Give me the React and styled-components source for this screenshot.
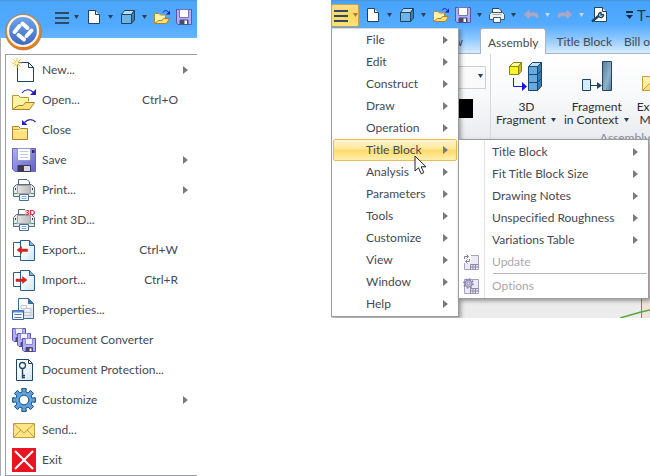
import React from 'react'
import styled, { createGlobalStyle, css } from 'styled-components'

const theme = {
  text: '#454952',
  muted: '#a9a9ad',
  line: '#9a9ca6',
  outline: '#1f4566',
  font: 'Lato, "Open Sans", sans-serif',
}

const GlobalStyle = createGlobalStyle`
  * { box-sizing: border-box; }
  body {
    margin: 0;
    background: #fff;
    color: ${theme.text};
    font-family: ${theme.font};
    font-size: 12px;
    font-variant-ligatures: none;
    line-height: 16px;
  }
  svg { display: block; flex: none; }
`

const Page = styled.div`
  display: flex;
  align-items: flex-start;
  gap: 134px;
`

const AppWindow = styled.section`
  position: relative;
  flex: ${props => props.$grow} 1 0;
  min-width: 0;
  overflow: hidden;
`

const plainButton = css`
  display: flex;
  align-items: center;
  margin: 0;
  padding: 0;
  border: none;
  background: none;
  color: inherit;
  font: inherit;
  font-variant-ligatures: none;
  white-space: nowrap;
`

/* title bar and quick access */

const TitleBar = styled.header`
  height: 38px;
  padding: 4px 0 0 52px;
  overflow: hidden;
  background: linear-gradient(#4d93d4 0, #4ca6fb 2px, #51aafe 26px, #68b5ff 100%);
`

const QuickBar = styled.div`
  display: flex;
  align-items: center;
  gap: 6px;
  height: 26px;
`

const ToolButton = styled.button`
  ${plainButton}
  flex: none;
  gap: 5px;
  height: 22px;
`

const MenuToggle = styled(ToolButton)`
  width: 28px;
  height: 23px;
  gap: 4px;
  padding-left: 3px;
  border-radius: 2px;
  ${props => props.$open && css`
    padding-left: 2px;
    border: 1px solid #c9a24a;
    background: linear-gradient(#f7dc8c, #ffd765 50%, #ffe27c);
  `}
`

const TitleText = styled.div`
  display: flex;
  align-items: center;
  gap: 4px;
  margin-left: 12px;
  color: #22384f;
  font-size: 15px;
  white-space: nowrap;
`

const Orb = styled.button`
  ${plainButton}
  position: absolute;
  top: 12px;
  left: 4px;
  border-radius: 50%;
`

/* application menu */

const AppBody = styled.div`
  padding: 16px 0 0 4px;
  border-left: 1px solid #a9abb2;
  background: #fff;
`

const AppMenu = styled.nav`
  border: 1px solid ${theme.line};
  border-right: none;
`

const AppItem = styled.button`
  ${plainButton}
  width: 100%;
  height: 30px;
  gap: 6px;
  padding: 0 9px 0 6px;
`

const Label = styled.span`
  flex: 1;
  text-align: left;
`

const Shortcut = styled.span`
  margin-right: 10px;
`

/* ribbon window */

const RibbonHead = styled.header`
  padding-top: 2px;
  background: linear-gradient(#4d93d4 0, #47a3fc 2px, #52abff 24px, #8ac6ff 38px, #dceeff 100%);
`

const Tabs = styled.div`
  display: flex;
  align-items: stretch;
  height: 26px;
  border-bottom: 1px solid #a3b4c6;
`

const Tab = styled.button`
  ${plainButton}
  flex: none;
  padding: 2px 6px 0;
  ${props => props.$first && css`
    justify-content: flex-end;
    width: 138px;
    margin-right: 11px;
  `}
  ${props => props.$active && css`
    height: 26px;
    margin-right: 4px;
    padding: 2px 7px 0;
    border: 1px solid #a3b4c6;
    border-bottom: none;
    border-radius: 3px 3px 0 0;
    background: #fff;
  `}
`

const Ribbon = styled.div`
  display: flex;
  height: 86px;
  overflow: hidden;
  border-bottom: 1px solid #8f929a;
  background: linear-gradient(#fff, #f8f9fa 50%, #e9ebef);
`

const StyleGroup = styled.div`
  display: flex;
  flex: 0 0 160px;
  flex-direction: column;
  align-items: flex-end;
  gap: 10px;
  padding: 12px 4px 0 0;
  border-right: 1px solid #d5d8dd;
`

const Combo = styled.div`
  position: relative;
  width: 100px;

  svg {
    position: absolute;
    top: 8px;
    right: 2px;
    pointer-events: none;
  }
`

const Select = styled.select`
  width: 100%;
  height: 23px;
  border: 1px solid #cdd0d5;
  border-radius: 0;
  background: #fafafb;
  appearance: none;
`

const Swatch = styled.button`
  ${plainButton}
  width: 30px;
  height: 19px;
  margin-right: 13px;
  background: #000;
`

const Group = styled.div`
  flex: 0 0 268px;
`

const GroupButtons = styled.div`
  display: flex;
  gap: 1px;
  height: 76px;
  padding: 7px 0 0 2px;
`

const RibbonButton = styled.button`
  ${plainButton}
  flex-direction: column;
  flex: none;
  gap: 7px;
  padding: 0 3px;
  color: #2c2f35;
  line-height: 13px;
  justify-content: flex-start;
`

const ButtonLine = styled.span`
  display: flex;
  align-items: center;
  justify-content: center;
  gap: 4px;
`

const GroupName = styled.div`
  color: #868b97;
  text-align: center;
`

const Canvas = styled.main`
  display: flex;
  justify-content: flex-end;
  align-items: flex-end;
  min-height: 178px;
  background: #ececed;
`

/* drop-down menus */

const Popup = styled.div`
  position: absolute;
  padding: 0 1px 1px;
  border: 1px solid #999ba1;
  background: #fff;
  box-shadow: 2px 2px 4px rgba(0, 0, 0, 0.35);
`

const MainMenu = styled(Popup)`
  top: 28px;
  left: 0;
  width: 128px;
  border-top-color: #d8dbe0;
`

const SubMenu = styled(Popup)`
  top: 0;
  left: 125px;
  width: 191px;
  padding-top: 1px;
  background: linear-gradient(90deg, #fff 25px, #e2e4e8 25px, #e2e4e8 26px, #fff 26px);
`

const MenuRow = styled.div`
  position: relative;
`

const MenuItem = styled.button`
  ${plainButton}
  width: 100%;
  height: 22px;
  padding: 0 9px 0 33px;
  ${props => props.$open && css`
    padding: 0 8px 0 32px;
    border: 1px solid #e3bf55;
    border-radius: 2px;
    background: linear-gradient(#fff4cf, #fee79a 45%, #ffd966 50%, #fff0b0);
  `}
`

const SubItem = styled(MenuItem)`
  gap: 12px;
  padding: 0 9px 0 3px;
  &:disabled { color: ${theme.muted}; }
`

const IconSlot = styled.span`
  flex: 0 0 17px;
`

const Separator = styled.hr`
  margin: 0 0 1px 33px;
  border: none;
  border-top: 1px solid #b4b5b9;
`

const Pointer = styled.svg`
  position: absolute;
  top: 16px;
  left: 81px;
  z-index: 2;
`

/* icons */

const Icon = ({ size = 24, children }) => (
  <svg width={size} height={size} viewBox="0 0 24 24" fill="none" stroke={theme.outline} aria-hidden="true">
    {children}
  </svg>
)

const Mini = ({ children }) => (
  <svg width="16" height="16" viewBox="0 0 16 16" fill="none" stroke={theme.outline} aria-hidden="true">
    {children}
  </svg>
)

const Arrow = () => (
  <svg width="5" height="8" viewBox="0 0 5 8" aria-hidden="true"><path d="M0 0L5 4L0 8z" fill="#777a80" /></svg>
)

const Caret = ({ color = '#2b4157' }) => (
  <svg width="7" height="4" viewBox="0 0 7 4" aria-hidden="true"><path d="M1 0H6L3.5 4z" fill={color} /></svg>
)

const Gradients = () => (
  <svg width="0" height="0" style={{ position: 'absolute' }} aria-hidden="true">
    <defs>
      <linearGradient id="violet" x1="0" y1="0" x2="1" y2="1">
        <stop offset="0" stopColor="#b4b0f6" /><stop offset="1" stopColor="#625dc8" />
      </linearGradient>
      <linearGradient id="paper" x1="0" y1="0" x2="1" y2="1">
        <stop offset="0.3" stopColor="#fff" /><stop offset="1" stopColor="#cfe2f4" />
      </linearGradient>
      <linearGradient id="ring" x1="0" y1="0" x2="0" y2="1">
        <stop offset="0" stopColor="#b9a48e" /><stop offset="0.45" stopColor="#d98a3a" /><stop offset="1" stopColor="#e8780c" />
      </linearGradient>
      <linearGradient id="disc" x1="0" y1="0" x2="0" y2="1">
        <stop offset="0" stopColor="#6ea6ea" /><stop offset="1" stopColor="#3b66c4" />
      </linearGradient>
      <linearGradient id="slab" x1="0" y1="0" x2="1" y2="1">
        <stop offset="0" stopColor="#5a7f9c" /><stop offset="0.6" stopColor="#8fb0c8" /><stop offset="1" stopColor="#54799a" />
      </linearGradient>
      <linearGradient id="body" x1="0" y1="0" x2="1" y2="0">
        <stop offset="0" stopColor="#e4e4e4" /><stop offset="1" stopColor="#b9b9b9" />
      </linearGradient>
    </defs>
  </svg>
)

const NewIcon = () => (
  <Icon>
    <path d="M5.5 4.5H16.5L21.5 9.5V23.5H5.5z" fill="#fff" />
    <path d="M16.5 4.5V9.5H21.5" />
    <path d="M5 0V10M0 5H10M1.5 1.5L8.5 8.5M8.5 1.5L1.5 8.5" stroke="#e3c53c" />
    <circle cx="5" cy="5" r="1.5" fill="#fff9c0" stroke="none" />
  </Icon>
)

const OpenIcon = () => (
  <Icon>
    <path d="M0.5 21.5V7.5H6.5L8.5 9.5H16.5V13.5" fill="#fff3a6" stroke="#b8963a" />
    <path d="M0.5 21.5L6.5 17.5H11L13.5 14.5H22.5L17.5 21.5z" fill="#ffe07a" stroke="#a9822a" />
    <path d="M10 5C13 1 18 0.5 21.5 4.5" stroke="#2a20b8" strokeWidth="1.2" />
    <path d="M18 7H24V1z" fill="#2a20b8" stroke="none" />
  </Icon>
)

const CloseIcon = () => (
  <Icon>
    <path d="M0.5 21.5V8.5H6.5L8.5 10.5H15.5V21.5z" fill="#ffe27e" stroke="#a9822a" />
    <path d="M1 12.5H15" stroke="#fff4bd" />
    <path d="M0.5 11.5H7.5L8.5 10.5" stroke="#c9a346" />
    <path d="M12.5 4.5C16 0.5 21 1 23.5 4" stroke="#2a20b8" strokeWidth="1.2" />
    <path d="M10 2V7H15.5z" fill="#2a20b8" stroke="none" />
  </Icon>
)

const SaveIcon = () => (
  <Icon>
    <path d="M0.5 0.5H23.5V23.5H3L0.5 21z" fill="url(#violet)" stroke="#6864b4" />
    <path d="M5.5 0.5H18.5V11.5L17 12.5H7L5.5 11.5z" fill="#fff" stroke="#8a9cc0" />
    <path d="M8 3.5H16M8 6.5H16M8 9.5H16" stroke="#b6cde4" />
    <rect x="20" y="2" width="2.5" height="3" fill="#2c2a6c" stroke="none" />
    <path d="M6 17.5H18.5V23.5H6z" fill="#3c3c44" stroke="#3a3868" />
    <path d="M12 18H18V23H12z" fill="#d6d8dc" stroke="none" />
  </Icon>
)

const PrintIcon = ({ children }) => (
  <Icon>
    <path d="M6.5 8V1.5H15L17.5 4V8z" fill="#fff" stroke="#4d6378" />
    <path d="M1.5 9.5L4.5 6.5H19.5L22.5 9.5V18.5H1.5z" fill="#e6e8e9" stroke="#5b6c7a" />
    <path d="M5.5 7.5H18.5V15.5H5.5z" fill="url(#body)" stroke="#9da5ab" />
    <path d="M3.5 10V12M20.5 10V12" stroke="#2c4657" />
    <path d="M2 15.5H5M19 15.5H22" stroke="#4ba06f" />
    <path d="M7.5 16.5H16.5V22.5H7.5z" fill="#f3f9ff" stroke="#4d6f91" />
    <path d="M9.5 18.5H14.5M9.5 20.5H14.5" stroke="#8bb5d8" />
    {children}
  </Icon>
)

const Print3DIcon = () => (
  <PrintIcon>
    <path d="M13 0H24V7H13z" fill="#fff" stroke="none" />
    <text x="13" y="7" fill="#d8161c" stroke="none" fontFamily="Liberation Sans, sans-serif" fontSize="8" fontWeight="700">3D</text>
  </PrintIcon>
)

const TwoPages = ({ children }) => (
  <Icon>
    <path d="M1.5 4.5H11.5V18.5H1.5z" fill="#fff" stroke="#2d5f8c" />
    <path d="M8.5 2.5H17.5L22.5 7.5V22.5H8.5z" fill="url(#paper)" stroke="#2d5f8c" />
    <path d="M17.5 2.5V7.5H22.5" fill="#7fb2de" stroke="#2d5f8c" />
    {children}
  </Icon>
)

const ExportIcon = () => (
  <TwoPages><path d="M5 12L9.5 8.5V11H15.5V13.5H9.5V15.5z" fill="#e2211f" stroke="#a8201e" strokeWidth="0.5" /></TwoPages>
)

const ImportIcon = () => (
  <TwoPages><path d="M15 12L10.5 8.5V11H4V13.5H10.5V15.5z" fill="#e2211f" stroke="#a8201e" strokeWidth="0.5" /></TwoPages>
)

const PropertiesIcon = () => (
  <Icon>
    <path d="M6.5 0.5H16.5L21.5 5.5V20.5H6.5z" fill="url(#paper)" stroke="#3c6a96" />
    <path d="M16.5 0.5V5.5H21.5" fill="#3b73ac" stroke="#3c6a96" />
    <path d="M9 7.5H14.5V10.5H9zM14.5 10.5H19V14.5H12V10.5M12 14.5V17.5H19V14.5" stroke="#c3c6cb" />
    <path d="M0.5 12.5H11.5V21.5H0.5z" fill="#f4f8fd" stroke="#3b5f9c" />
    <path d="M1 13.5H11" stroke="#5f8ad6" strokeWidth="2" />
    <path d="M2.5 16.5H9.5M2.5 19.5H9.5" stroke="#5b7aa5" />
  </Icon>
)

const ConverterIcon = () => (
  <Icon>
    {[0, 5, 10].map(d => (
      <g key={d} transform={`translate(${d} ${d})`}>
        <path d="M0.5 0.5H13.5V13.5H2L0.5 12z" fill="#b4affa" stroke="#5a54ae" />
        <path d="M3.5 0.5H10.5V6.5H3.5z" fill="#f1f1fb" stroke="#8d89cc" />
        <path d="M4 9.5H10.5V13.5H4z" fill="#47464d" stroke="#4b4788" />
        <path d="M7.5 10.5H9.5V13H7.5z" fill="#fff" stroke="none" />
      </g>
    ))}
  </Icon>
)

const ProtectionIcon = () => (
  <Icon>
    <path d="M4.5 1.5H16.5L20.5 5.5V22.5H4.5z" fill="url(#paper)" />
    <path d="M16.5 1.5V5.5H20.5" />
    <circle cx="10.5" cy="7.5" r="3" fill="#fff" strokeWidth="1.3" />
    <path d="M10.5 10.5V20.5M10.5 17.5H13M10.5 19.5H13" strokeWidth="1.4" />
  </Icon>
)

const gearPath = (() => {
  const points = []
  for (let i = 0; i < 8; i++) {
    const mid = (i * Math.PI) / 4
    const corners = [[8.2, -0.24], [11.6, -0.2], [11.6, 0.2], [8.2, 0.24]]
    corners.forEach(([r, a]) => {
      points.push(`${(12 + r * Math.cos(mid + a)).toFixed(1)} ${(12 + r * Math.sin(mid + a)).toFixed(1)}`)
    })
  }
  return `M${points.join('L')}z`
})()

const CustomizeIcon = () => (
  <Icon>
    <path d={gearPath} fill="#5da2de" stroke="#1d4f7e" />
    <circle cx="12" cy="12" r="4.8" fill="#fff" stroke="#1d4f7e" />
  </Icon>
)

const SendIcon = () => (
  <Icon>
    <path d="M1.5 5.5H22.5V19.5H1.5z" fill="#ffe583" stroke="#c19c45" />
    <path d="M2 19L9 12M22 19L15 12M2 6L12 15L22 6" stroke="#c19c45" />
  </Icon>
)

const ExitIcon = () => (
  <Icon>
    <path d="M0 0H24V24H0z" fill="#ea1321" stroke="none" />
    <path d="M3 3L21 21M21 3L3 21" stroke="#fff" strokeWidth="2" />
  </Icon>
)

const Bars = () => (
  <svg width="14" height="13" viewBox="0 0 14 13" aria-hidden="true">
    <path d="M0 2H14M0 7H14M0 12H14" stroke="#2f4b63" strokeWidth="2" />
  </svg>
)

const PageIcon = () => (
  <Mini>
    <path d="M2.5 1.5H9.5L13.5 5.5V14.5H2.5z" fill="#fff" />
    <path d="M9.5 1.5V5.5H13.5" fill="#d9e9f6" />
  </Mini>
)

const CubeIcon = () => (
  <Mini>
    <path d="M1.5 5.5L4.5 1.5H14.5L11.5 5.5z" fill="#b5def9" />
    <path d="M11.5 5.5L14.5 1.5V11L11.5 14.5z" fill="#3f7dac" />
    <path d="M1.5 5.5H11.5V14.5H1.5z" fill="#6fb4e6" />
  </Mini>
)

const OpenMini = () => (
  <Mini>
    <path d="M0.5 14.5V4.5H5L6.5 6H11.5V9" fill="#fff3a6" stroke="#b08f3c" />
    <path d="M0.5 14.5L4.5 11.5H8L9.5 9.5H15.5L12.5 14.5z" fill="#ffe07a" stroke="#a9822a" />
    <path d="M9 3.5C10.5 1 13 1 14 3" stroke="#2018b0" />
    <path d="M12 5.5H16V1.5z" fill="#2018b0" stroke="none" />
  </Mini>
)

const SaveMini = () => (
  <Mini>
    <path d="M0.5 0.5H15.5V15.5H2L0.5 14z" fill="#b4aef6" stroke="#5b55a8" />
    <path d="M3.5 0.5H12.5V8.5H3.5z" fill="#fff" stroke="#7772b8" />
    <path d="M4 11H12V15H4z" fill="#4a4a55" stroke="#4b4788" />
    <path d="M8.5 11.5H11V15H8.5z" fill="#fff" stroke="none" />
  </Mini>
)

const PrintMini = () => (
  <Mini>
    <path d="M3.5 6V1.5H10L12.5 4V6z" fill="#fff" />
    <path d="M0.5 7.5L2.5 5.5H13.5L15.5 7.5V12.5H0.5z" fill="#eceeef" stroke="#3f5a70" />
    <path d="M3.5 7.5H12.5" stroke="#a9afb4" />
    <path d="M4.5 10.5H11.5V15.5H4.5z" fill="#f3f9ff" stroke="#3f5a70" />
  </Mini>
)

const UndoIcon = () => (
  <Mini><path d="M1 7.5L6 3.5V6H13.5L15 7.5V10.5H13V9H6V11.5z" fill="#a5a8cc" stroke="#b3a3bb" strokeWidth="0.8" /></Mini>
)

const RedoIcon = () => (
  <Mini><path d="M15 7.5L10 3.5V6H2.5L1 7.5V10.5H3V9H10V11.5z" fill="#a5a8cc" stroke="#b3a3bb" strokeWidth="0.8" /></Mini>
)

const WrenchIcon = () => (
  <Mini>
    <path d="M3.5 0.5H11.5L15.5 4.5V14.5H3.5z" fill="#fff" />
    <path d="M11.5 0.5V4.5H15.5" fill="#d9e9f6" />
    <path d="M1 14.5L7.5 9" strokeWidth="2.4" />
    <path d="M12.5 7.5A2.5 2.5 0 1 1 10 5.5L10 8z" fill="#e6f1fa" strokeWidth="1.4" />
  </Mini>
)

const OrbIcon = () => (
  <svg width="40" height="40" viewBox="0 0 40 40" aria-hidden="true">
    <circle cx="19.5" cy="20" r="18" fill="url(#ring)" stroke="#8c7660" strokeOpacity="0.6" />
    <circle cx="19" cy="19" r="15" fill="url(#disc)" stroke="#fff3e2" strokeWidth="2.2" />
    <path
      d="M18.5 11.5L23.5 16M27.5 18.5L22.5 24M20 27.5L14.5 23M10.5 20L15.5 14"
      fill="none"
      stroke="#fff"
      strokeWidth="4"
      strokeLinecap="round"
    />
  </svg>
)

const FragmentIcon = () => (
  <svg width="34" height="32" viewBox="0 0 34 32" fill="none" aria-hidden="true">
    <g stroke="#8b8410">
      <path d="M0.5 5.5L4.5 1.5H12.5L9.5 5.5z" fill="#ffffa0" />
      <path d="M9.5 5.5L12.5 1.5V10L9.5 13.5z" fill="#c9bd12" />
      <path d="M0.5 5.5H9.5V13.5H0.5z" fill="#fbf32c" />
    </g>
    <path d="M4.5 17V25.5H14" stroke="#1914e0" />
    <path d="M13 21L18 25.5L13 30z" fill="#1914e0" />
    <g stroke="#17466e">
      <path d="M19.5 5.5L23.5 1.5H32.5L28.5 5.5z" fill="#bfe2fb" />
      <path d="M28.5 5.5L32.5 1.5V25L28.5 29.5z" fill="#3b79aa" />
      <path d="M19.5 5.5H28.5V29.5H19.5z" fill="#68aadd" />
      <path d="M19.5 13.5H28.5L32.5 9.5M19.5 21.5H28.5L32.5 17.5" />
    </g>
  </svg>
)

const ContextIcon = () => (
  <svg width="32" height="32" viewBox="0 0 32 32" fill="none" stroke={theme.outline} aria-hidden="true">
    <path d="M1.5 18.5H9.5V29.5H1.5z" fill="#d3ebfb" />
    <path d="M21.5 0.5H30.5V29.5H21.5z" fill="url(#slab)" />
    <path d="M10 24.5H18" />
    <path d="M16 21L21 24.5L16 28z" fill={theme.outline} stroke="none" />
  </svg>
)

const FolderIcon = () => (
  <svg width="12" height="32" viewBox="0 0 12 32" fill="none" stroke="#c49d3c" aria-hidden="true">
    <path d="M0.5 29.5V15.5H7.5L9.5 18.5H12.5V29.5z" fill="#fff2a4" />
    <path d="M0.5 29.5L7.5 22.5H12.5V29.5z" fill="#ffdf7c" />
  </svg>
)

const TableShape = () => (
  <>
    <path d="M1.5 1.5H15.5V15.5H1.5z" fill="#eceaf4" stroke="#a5a1c0" />
    <path d="M7.5 10.5H15.5M7.5 13H15.5M7.5 10.5V15.5M10 10.5V15.5M12.5 10.5V15.5" stroke="#8b86ae" />
  </>
)

const UpdateIcon = () => (
  <Mini>
    <TableShape />
    <path d="M0 0H8V9H0z" fill="#fff" stroke="none" />
    <path d="M1.5 5V2.5H5M3.5 0.5L5.5 2.5L3.5 4.5M6.5 5V7.5H3M4.5 5.5L2.5 7.5L4.5 9.5" stroke="#817ca6" />
  </Mini>
)

const OptionsIcon = () => (
  <Mini>
    <TableShape />
    <circle cx="5.5" cy="5.5" r="4.5" stroke="#8681aa" strokeWidth="1.6" strokeDasharray="1.8 1.7" />
    <circle cx="5.5" cy="5.5" r="3.5" fill="#c4c1da" stroke="#8681aa" />
    <circle cx="5.5" cy="5.5" r="1.3" fill="#fff" stroke="#8681aa" />
  </Mini>
)

const appItems = [
  { label: 'New...', icon: NewIcon, sub: true },
  { label: 'Open...', icon: OpenIcon, keys: 'Ctrl+O' },
  { label: 'Close', icon: CloseIcon },
  { label: 'Save', icon: SaveIcon, sub: true },
  { label: 'Print...', icon: PrintIcon, sub: true },
  { label: 'Print 3D...', icon: Print3DIcon },
  { label: 'Export...', icon: ExportIcon, keys: 'Ctrl+W' },
  { label: 'Import...', icon: ImportIcon, keys: 'Ctrl+R' },
  { label: 'Properties...', icon: PropertiesIcon },
  { label: 'Document Converter', icon: ConverterIcon },
  { label: 'Document Protection...', icon: ProtectionIcon },
  { label: 'Customize', icon: CustomizeIcon, sub: true },
  { label: 'Send...', icon: SendIcon },
  { label: 'Exit', icon: ExitIcon },
]

const mainItems = [
  'File', 'Edit', 'Construct', 'Draw', 'Operation', 'Title Block', 'Analysis',
  'Parameters', 'Tools', 'Customize', 'View', 'Window', 'Help',
]

const subItems = ['Title Block', 'Fit Title Block Size', 'Drawing Notes', 'Unspecified Roughness', 'Variations Table']

const FileTools = ({ open, saveMenu }) => (
  <>
    <MenuToggle aria-label="Menu" $open={open}><Bars /><Caret color={open ? '#a08040' : undefined} /></MenuToggle>
    <ToolButton aria-label="New"><PageIcon /><Caret /></ToolButton>
    <ToolButton aria-label="Model"><CubeIcon /><Caret /></ToolButton>
    <ToolButton aria-label="Open"><OpenMini /></ToolButton>
    <ToolButton aria-label="Save"><SaveMini />{saveMenu && <Caret />}</ToolButton>
  </>
)

const FileWindow = () => (
  <AppWindow $grow={197}>
    <TitleBar>
      <QuickBar><FileTools /></QuickBar>
    </TitleBar>
    <AppBody>
      <AppMenu>
        {appItems.map(({ label, icon: ItemIcon, keys, sub }) => (
          <AppItem key={label}>
            <ItemIcon />
            <Label>{label}</Label>
            {keys && <Shortcut>{keys}</Shortcut>}
            {sub && <Arrow />}
          </AppItem>
        ))}
      </AppMenu>
    </AppBody>
    <Orb aria-label="Application menu"><OrbIcon /></Orb>
  </AppWindow>
)

const TitleBlockMenu = () => (
  <SubMenu>
    {subItems.map(label => (
      <SubItem key={label}><IconSlot /><Label>{label}</Label><Arrow /></SubItem>
    ))}
    <SubItem disabled><IconSlot><UpdateIcon /></IconSlot><Label>Update</Label></SubItem>
    <Separator />
    <SubItem disabled><IconSlot><OptionsIcon /></IconSlot><Label>Options</Label></SubItem>
  </SubMenu>
)

const RibbonWindow = () => (
  <AppWindow $grow={319}>
    <RibbonHead>
      <QuickBar>
        <FileTools open saveMenu />
        <ToolButton aria-label="Print"><PrintMini /><Caret /></ToolButton>
        <ToolButton aria-label="Undo"><UndoIcon /><Caret color="#c3d8ee" /></ToolButton>
        <ToolButton aria-label="Redo"><RedoIcon /><Caret color="#c3d8ee" /></ToolButton>
        <ToolButton aria-label="Settings"><WrenchIcon /></ToolButton>
        <TitleText>
          <svg width="8" height="8" viewBox="0 0 8 8" aria-hidden="true"><path d="M1 0H8V2H1zM1 4H8L4.5 8z" fill="#1a2f45" /></svg>
          T-
        </TitleText>
      </QuickBar>
      <Tabs>
        <Tab $first>View</Tab>
        <Tab $active>Assembly</Tab>
        <Tab>Title Block</Tab>
        <Tab>Bill o</Tab>
      </Tabs>
    </RibbonHead>
    <Ribbon>
      <StyleGroup>
        <Combo>
          <Select aria-label="Style" />
          <Caret />
        </Combo>
        <Swatch aria-label="Color" />
      </StyleGroup>
      <Group>
        <GroupButtons>
          <RibbonButton>
            <FragmentIcon />
            <span>
              <ButtonLine>3D</ButtonLine>
              <ButtonLine>Fragment <Caret /></ButtonLine>
            </span>
          </RibbonButton>
          <RibbonButton>
            <ContextIcon />
            <span>
              <ButtonLine>Fragment</ButtonLine>
              <ButtonLine>in Context <Caret /></ButtonLine>
            </span>
          </RibbonButton>
          <RibbonButton>
            <FolderIcon />
            <span>
              <ButtonLine>Exte</ButtonLine>
              <ButtonLine>Mo</ButtonLine>
            </span>
          </RibbonButton>
        </GroupButtons>
        <GroupName>Assembly</GroupName>
      </Group>
    </Ribbon>
    <Canvas>
      <svg width="32" height="178" viewBox="0 0 32 178" aria-hidden="true">
        <path d="M23 0H32V178H23z" fill="#f0e2df" />
        <path d="M23.5 0V178" stroke="#dd5a50" />
        <path d="M2 178L23 172L32 170" fill="none" stroke="#58a83a" strokeWidth="1.5" />
      </svg>
    </Canvas>
    <MainMenu>
      {mainItems.map(label => (
        <MenuRow key={label}>
          <MenuItem $open={label === 'Title Block'}><Label>{label}</Label><Arrow /></MenuItem>
          {label === 'Title Block' && (
            <>
              <TitleBlockMenu />
              <Pointer width="14" height="20" viewBox="0 0 14 20" aria-hidden="true">
                <path d="M1 1V16L4.5 12.8L7.2 18.8L9.8 17.6L7.2 11.8H12z" fill="#fff" stroke="#20232b" />
              </Pointer>
            </>
          )}
        </MenuRow>
      ))}
    </MainMenu>
  </AppWindow>
)

const App = () => (
  <>
    <GlobalStyle />
    <Gradients />
    <Page>
      <FileWindow />
      <RibbonWindow />
    </Page>
  </>
)

export default App
